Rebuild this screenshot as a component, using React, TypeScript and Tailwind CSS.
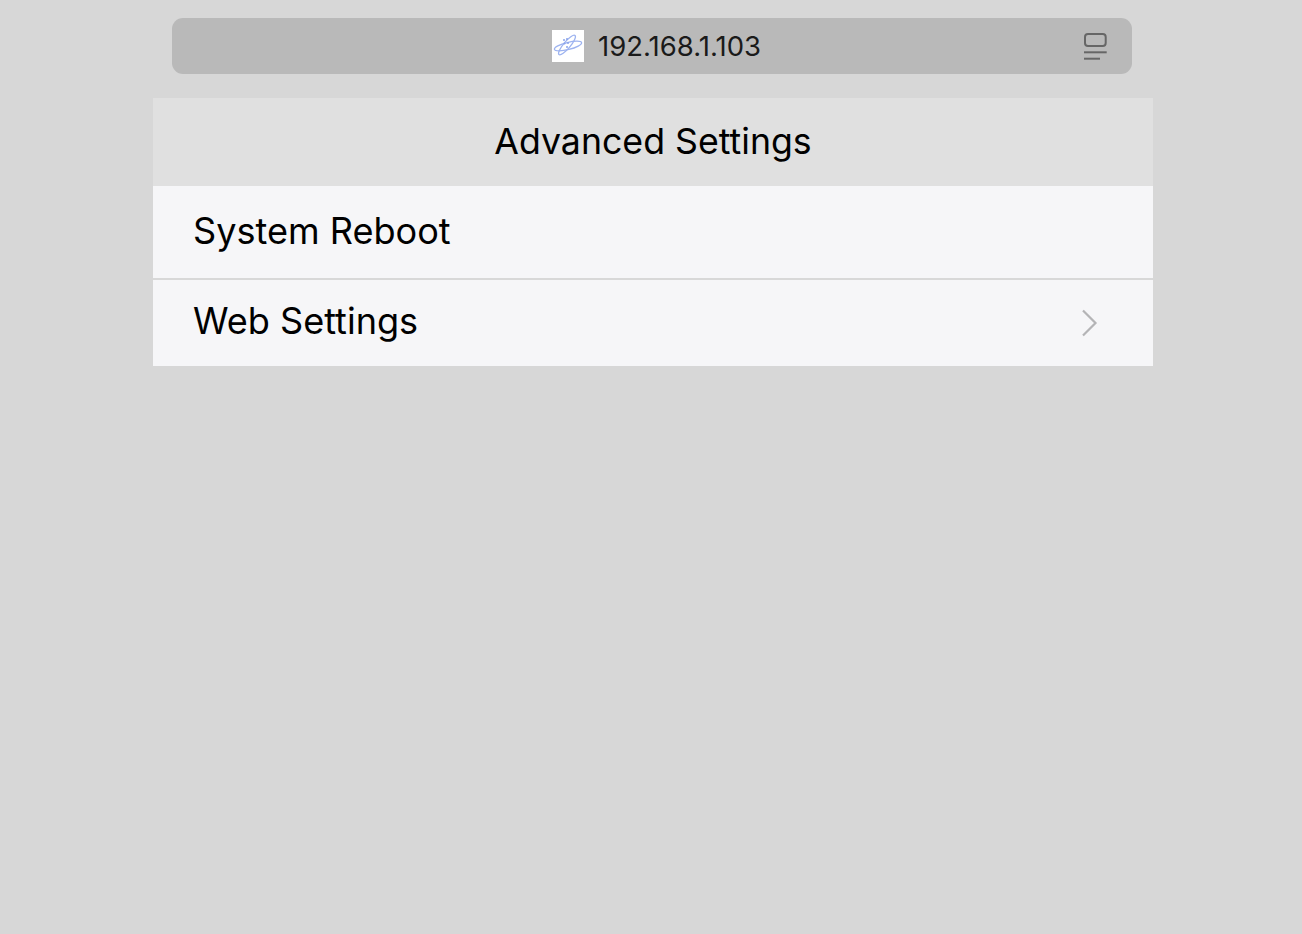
import React from 'react';

function SiteIcon() {
    return (
        <div className="w-8 h-8 bg-white shrink-0">
            <svg width="32" height="32" viewBox="0 0 32 32" fill="none" stroke="#9db3f0" strokeWidth="1.3">
                <ellipse cx="16" cy="16" rx="14" ry="3.6" transform="rotate(-14 16 16)" />
                <ellipse cx="15" cy="15" rx="12.5" ry="3.4" transform="rotate(-50 15 15)" />
                <g fill="#8aa3ea" stroke="none">
                    <circle cx="12" cy="10" r="1" />
                    <circle cx="15" cy="9" r="1" />
                    <circle cx="12.5" cy="13.5" r="1" />
                    <circle cx="16" cy="13" r="1" />
                    <circle cx="15" cy="17" r="1" />
                </g>
            </svg>
        </div>
    );
}

function TabsIcon() {
    return (
        <svg width="24" height="30" viewBox="0 0 24 30" fill="none" stroke="#666666" strokeWidth="2" className="shrink-0">
            <rect x="1" y="3" width="20.7" height="12" rx="3" />
            <path d="M0 21.3H22.7" />
            <path d="M0 27.7H16" />
        </svg>
    );
}

export default function App() {
    return (
        <div className="min-h-[934px] bg-[#d7d7d7] flex flex-col items-center pl-[4px] pt-[18px] text-black" style={{ fontFamily: '"Inter", "Liberation Sans", sans-serif' }}>
            <div className="relative w-[960px] h-14 mr-[2px] rounded-[11px] bg-[#b9b9b9] flex items-center justify-center gap-3.5 pl-[9px]">
                <SiteIcon />
                <span className="text-[27.5px] leading-none text-[#1a1a1a] pt-[2px]">192.168.1.103</span>
                <div className="absolute right-6 top-[13px]">
                    <TabsIcon />
                </div>
            </div>
            <div className="mt-6 w-[1000px]">
                <div className="h-[88px] bg-[#e0e0e0] flex items-center justify-center text-[35.7px]">Advanced Settings</div>
                <div className="h-[92px] bg-[#f6f6f8] flex items-center px-10 pb-[2px] text-[36.1px]">System Reboot</div>
                <div className="h-0.5 bg-[#d8d8d8]" />
                <div className="h-[86px] bg-[#f6f6f8] flex items-center justify-between pl-10 pr-[54px] pb-[4px] text-[36.1px]">
                    <span>Web Settings</span>
                    <svg width="18" height="28" viewBox="0 0 18 28" fill="none" stroke="#b4b4b6" strokeWidth="2.2" className="mt-1">
                        <path d="M2 1.5L14.5 14L2 26.5" />
                    </svg>
                </div>
            </div>
        </div>
    );
}
